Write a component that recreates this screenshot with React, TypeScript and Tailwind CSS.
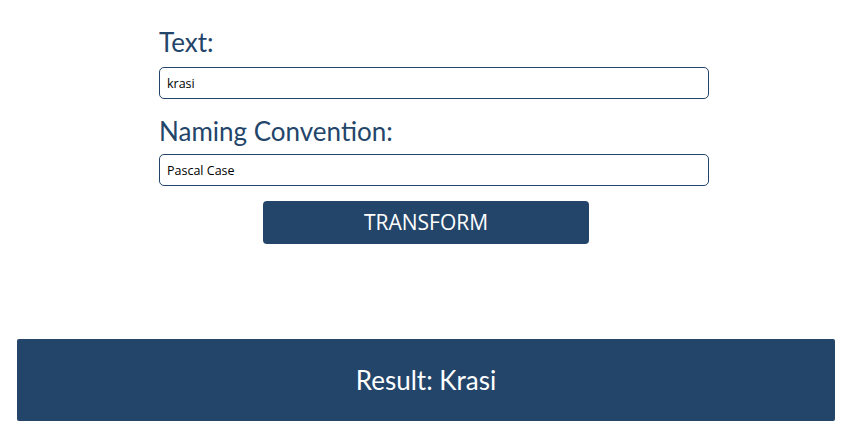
export default function App() {
  return (
    <div className="min-h-screen bg-white pl-[17px] pr-[27px]" style={{ fontFamily: 'Lato, "Open Sans", sans-serif' }}>
      <div className="ml-[142px] w-[550px] pt-[27px]">
        <label className="block text-[26px] leading-[31px] text-[#23456a]">Text:</label>
        <input
          className="mt-[9px] block h-[32px] w-full rounded-[5px] border border-[#23456a] px-[7px] text-[12.5px] text-black outline-none"
          style={{ fontFamily: '"Open Sans", sans-serif' }}
          defaultValue="krasi"
        />
        <label className="mt-[17px] block text-[26px] leading-[31px] text-[#23456a]">Naming Convention:</label>
        <input
          className="mt-[7px] block h-[32px] w-full rounded-[5px] border border-[#23456a] px-[7px] text-[12.5px] text-black outline-none"
          style={{ fontFamily: '"Open Sans", sans-serif' }}
          defaultValue="Pascal Case"
        />
      </div>
      <button
        className="mx-auto mt-[15px] flex h-[43px] w-[326px] items-center justify-center rounded-[4px] bg-[#23456a] text-[21px] font-medium text-white"
        style={{ fontFamily: '"Open Sans", sans-serif' }}
      >
        TRANSFORM
      </button>
      <div className="mt-[95px] flex h-[82px] items-center justify-center rounded-[2px] bg-[#23456a] text-[26px] text-white">
        Result: Krasi
      </div>
    </div>
  );
}
